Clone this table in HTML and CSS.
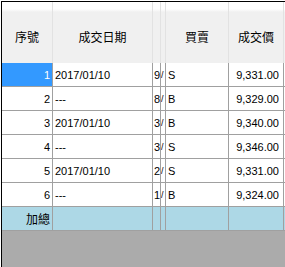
FILE: index.html
```html
<!DOCTYPE html>
<html>
<head>
<meta charset="utf-8">
<link rel="stylesheet" href="styles.css">
</head>
<body>
<div class="frame">
  <div class="grid">
    <div class="h">序號</div>
    <div class="h">成交日期</div>
    <div class="h"></div>
    <div class="h"></div>
    <div class="h">買賣</div>
    <div class="h">成交價</div>
    <div class="h"></div>

    <div class="c r sel">1</div><div class="c l">2017/01/10</div><div class="c l n">9</div><div class="c k">/</div><div class="c l">S</div><div class="c r">9,331.00</div><div class="c"></div>
    <div class="c r">2</div><div class="c l">---</div><div class="c l n">8</div><div class="c k">/</div><div class="c l">B</div><div class="c r">9,329.00</div><div class="c"></div>
    <div class="c r">3</div><div class="c l">2017/01/10</div><div class="c l n">3</div><div class="c k">/</div><div class="c l">B</div><div class="c r">9,340.00</div><div class="c"></div>
    <div class="c r">4</div><div class="c l">---</div><div class="c l n">3</div><div class="c k">/</div><div class="c l">S</div><div class="c r">9,346.00</div><div class="c"></div>
    <div class="c r">5</div><div class="c l">2017/01/10</div><div class="c l n">2</div><div class="c k">/</div><div class="c l">S</div><div class="c r">9,331.00</div><div class="c"></div>
    <div class="c r">6</div><div class="c l">---</div><div class="c l n">1</div><div class="c k">/</div><div class="c l">B</div><div class="c r">9,324.00</div><div class="c"></div>

    <div class="c r sum cjk">加總</div><div class="c sum"></div><div class="c sum"></div><div class="c sum"></div><div class="c sum"></div><div class="c sum"></div><div class="c sum"></div>
  </div>
</div>
</body>
</html>
```

FILE: styles.css
```css
html, body {
  margin: 0;
  padding: 0;
  background: #ffffff;
}

.frame {
  margin: 1px 0 0 1px;
  height: 266px;
  border-top: 1px solid #000000;
  border-left: 1px solid #000000;
  background: #ababab;
  overflow: hidden;
}

.grid {
  display: grid;
  grid-template-columns: 51px 100px 8px 5px 63px 55px 40px;
  grid-template-rows: 61px repeat(7, 24px);
  width: 322px;
  font-family: "Liberation Sans", Arial, "Noto Sans CJK TC", sans-serif;
  font-size: 11px;
  color: #000000;
}

.h {
  box-sizing: border-box;
  background: linear-gradient(to bottom, #ffffff 0, #ffffff 7px, #f0f0f0 10px, #f0f0f0 100%);
  border-right: 1px solid #e2e2e2;
  display: flex;
  align-items: center;
  justify-content: center;
  padding-top: 8px;
  font-family: "Noto Sans CJK TC", "Noto Sans CJK SC", sans-serif;
  font-size: 12px;
  line-height: 14px;
  color: #000000;
}

.c {
  box-sizing: border-box;
  background: #ffffff;
  border-right: 1px solid #a0a0a0;
  border-bottom: 1px solid #a0a0a0;
  display: flex;
  align-items: center;
  white-space: nowrap;
  overflow: hidden;
  line-height: 14px;
}

.r {
  justify-content: flex-end;
  padding-right: 2px;
}

.grid > .c.r:nth-child(7n + 6) {
  padding-right: 4px;
}

.l {
  justify-content: flex-start;
  padding-left: 2px;
}

.n {
  padding-left: 1px;
}

.k {
  justify-content: flex-start;
  padding-left: 0;
  font-size: 9px;
}

.sel {
  background: #3399ff;
  color: #ffffff;
}

.sum {
  background: #add8e6;
}

.cjk {
  font-family: "Noto Sans CJK TC", "Noto Sans CJK SC", sans-serif;
  font-size: 12px;
}
```
